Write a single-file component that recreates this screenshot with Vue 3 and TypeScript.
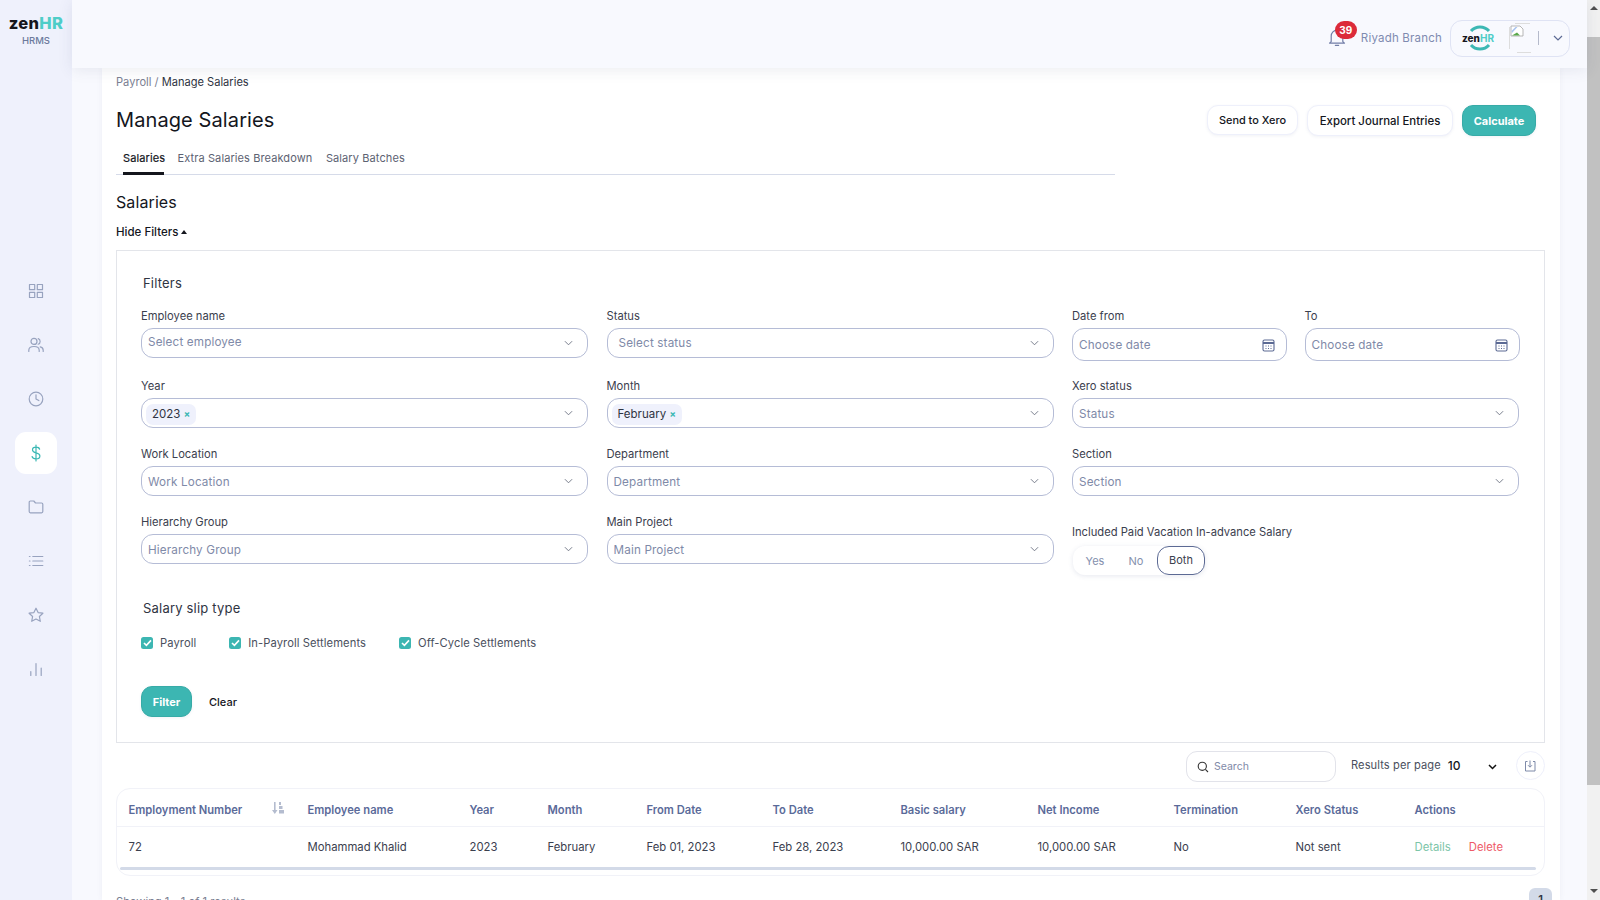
<script setup lang="ts">
const navItems = ['grid', 'users', 'clock', 'dollar', 'folder', 'list', 'star', 'bars']
const columns = ['Employment Number', 'Employee name', 'Year', 'Month', 'From Date', 'To Date', 'Basic salary', 'Net Income', 'Termination', 'Xero Status', 'Actions']
const cells = ['72', 'Mohammad Khalid', '2023', 'February', 'Feb 01, 2023', 'Feb 28, 2023', '10,000.00 SAR', '10,000.00 SAR', 'No', 'Not sent']
const slips = ['Payroll', 'In-Payroll Settlements', 'Off-Cycle Settlements']
</script>

<template>
  <div class="app">
    <aside class="sidebar">
      <div class="logo">
        <div class="logo-word">zen<span>HR</span></div>
        <div class="logo-sub">HRMS</div>
      </div>
      <nav class="nav">
        <div v-for="item in navItems" :key="item" class="nav-item" :class="{ active: item === 'dollar' }">
          <svg width="18" height="18" viewBox="0 0 18 18" fill="none" stroke="currentColor" stroke-width="1.2" stroke-linecap="round" stroke-linejoin="round">
            <template v-if="item === 'grid'">
              <rect x="2.5" y="2.5" width="5.2" height="5.2" /><rect x="10.3" y="2.5" width="5.2" height="5.2" /><rect x="2.5" y="10.3" width="5.2" height="5.2" /><rect x="10.3" y="10.3" width="5.2" height="5.2" />
            </template>
            <template v-else-if="item === 'users'">
              <circle cx="7" cy="5.4" r="3" /><path d="M1.8 15.5v-1.2c0-2.4 2-3.8 5.2-3.8s5.2 1.4 5.2 3.8v1.2" /><path d="M11.2 2.6a3 3 0 0 1 0 5.6M13.2 10.8c1.9.4 3 1.6 3 3.4v1.3" />
            </template>
            <template v-else-if="item === 'clock'">
              <circle cx="9" cy="9" r="6.8" /><path d="M9 4.8V9l2.8 1.6" />
            </template>
            <template v-else-if="item === 'dollar'">
              <path d="M12.6 5.2c-.4-1.3-1.8-2-3.6-2-2 0-3.5 1-3.5 2.7 0 3.9 7.4 2 7.4 6 0 1.8-1.6 2.9-3.9 2.9-2 0-3.5-.8-3.9-2.3M9 1v16" />
            </template>
            <template v-else-if="item === 'folder'">
              <path d="M2.2 4.2c0-.7.5-1.2 1.2-1.2h3.4l1.7 2h6.1c.7 0 1.2.5 1.2 1.2v7.4c0 .7-.5 1.2-1.2 1.2H3.4c-.7 0-1.2-.5-1.2-1.2z" />
            </template>
            <template v-else-if="item === 'list'">
              <path d="M5.8 4.5h10M5.8 9h10M5.8 13.5h10M2.4 4.5h.6M2.4 9h.6M2.4 13.5h.6" />
            </template>
            <template v-else-if="item === 'star'">
              <path d="M9 2.2l2.1 4.4 4.8.6-3.5 3.3.9 4.8L9 13l-4.3 2.3.9-4.8-3.5-3.3 4.8-.6z" />
            </template>
            <template v-else>
              <path d="M3.8 15.5v-4M9 15.5V3.5M14.2 15.5V8" />
            </template>
          </svg>
        </div>
      </nav>
    </aside>

    <div class="main">
      <header class="topbar">
        <div class="bell-wrap">
          <svg class="bell" width="18" height="20" viewBox="0 0 18 20" fill="none" stroke="#737fa8" stroke-width="1.2" stroke-linecap="round" stroke-linejoin="round">
            <path d="M3.2 14.6V9a5.8 5.8 0 0 1 11.6 0v5.6l1.7 1.5h-15zM7.4 18.4h3.2" />
          </svg>
          <span class="badge">39</span>
        </div>
        <span class="branch">Riyadh Branch</span>
        <div class="account">
          <div class="mini-logo">
            <svg class="mini-ring" width="28" height="28" viewBox="0 0 28 28" fill="none" stroke="#3cb8b4" stroke-width="3">
              <path d="M5 7a12 12 0 0 1 18 0M23 21a12 12 0 0 1-18 0" />
            </svg>
            <span class="mini-word">zen<span>HR</span></span>
          </div>
          <svg class="broken" width="26" height="30" viewBox="0 0 26 30" fill="none">
            <path d="M.5 4v22M6 .5h15M8 29.5h14" stroke="#dddddd" />
            <path d="M2 3h9l3 3v7H2z" fill="#fff" stroke="#a5a5a5" stroke-width=".8" />
            <path d="M2.5 8l4-4h2L3 10z" fill="#aac4f0" />
            <path d="M3 12.5l5-3 3 3z" fill="#58a84b" />
          </svg>
          <span class="divider"></span>
          <svg class="chev" width="10" height="6" viewBox="0 0 10 6" fill="none" stroke="#5c6a94" stroke-width="1.2"><path d="M1 1l4 4 4-4" /></svg>
        </div>
      </header>

      <div class="content">
        <section class="card">
          <div class="crumbs"><span class="crumb-root">Payroll / </span>Manage Salaries</div>
          <div class="title-row">
            <h1>Manage Salaries</h1>
            <div class="actions">
              <button class="btn small">Send to Xero</button>
              <button class="btn export-btn">Export Journal Entries</button>
              <button class="btn primary">Calculate</button>
            </div>
          </div>
          <div class="tabs">
            <span class="tab on">Salaries</span>
            <span class="tab">Extra Salaries Breakdown</span>
            <span class="tab">Salary Batches</span>
          </div>
          <h2>Salaries</h2>
          <div class="hide">Hide Filters <i class="caret"></i></div>

          <div class="filters">
            <h3 class="filters-title">Filters</h3>
            <div class="form">
              <div class="field"><label>Employee name</label><div class="select"><span class="ph lift">Select employee</span><svg class="dn" viewBox="0 0 10 6"><path d="M1 1l4 4 4-4" /></svg></div></div>
              <div class="field"><label>Status</label><div class="select"><span class="ph wide">Select status</span><svg class="dn" viewBox="0 0 10 6"><path d="M1 1l4 4 4-4" /></svg></div></div>
              <div class="dates">
                <div class="field"><label>Date from</label><div class="select date"><span class="ph">Choose date</span><svg width="13" height="14" viewBox="0 0 13 14" fill="none" stroke="#5c6a94" stroke-width="1.1"><rect x="1" y="2" width="11" height="11" rx="1.5" /><path d="M1 5h11" stroke-width="2" /><path d="M3.5 8h1M6 8h1M8.5 8h1M3.5 10.5h1M6 10.5h1M8.5 10.5h1" /></svg></div></div>
                <div class="field"><label>To</label><div class="select date"><span class="ph">Choose date</span><svg width="13" height="14" viewBox="0 0 13 14" fill="none" stroke="#5c6a94" stroke-width="1.1"><rect x="1" y="2" width="11" height="11" rx="1.5" /><path d="M1 5h11" stroke-width="2" /><path d="M3.5 8h1M6 8h1M8.5 8h1M3.5 10.5h1M6 10.5h1M8.5 10.5h1" /></svg></div></div>
              </div>

              <div class="field"><label>Year</label><div class="select"><span class="chip">2023 <b>×</b></span><svg class="dn" viewBox="0 0 10 6"><path d="M1 1l4 4 4-4" /></svg></div></div>
              <div class="field"><label>Month</label><div class="select"><span class="chip">February <b>×</b></span><svg class="dn" viewBox="0 0 10 6"><path d="M1 1l4 4 4-4" /></svg></div></div>
              <div class="field"><label>Xero status</label><div class="select"><span class="ph">Status</span><svg class="dn" viewBox="0 0 10 6"><path d="M1 1l4 4 4-4" /></svg></div></div>

              <div class="field"><label>Work Location</label><div class="select"><span class="ph">Work Location</span><svg class="dn" viewBox="0 0 10 6"><path d="M1 1l4 4 4-4" /></svg></div></div>
              <div class="field"><label>Department</label><div class="select"><span class="ph">Department</span><svg class="dn" viewBox="0 0 10 6"><path d="M1 1l4 4 4-4" /></svg></div></div>
              <div class="field"><label>Section</label><div class="select"><span class="ph">Section</span><svg class="dn" viewBox="0 0 10 6"><path d="M1 1l4 4 4-4" /></svg></div></div>

              <div class="field"><label>Hierarchy Group</label><div class="select"><span class="ph">Hierarchy Group</span><svg class="dn" viewBox="0 0 10 6"><path d="M1 1l4 4 4-4" /></svg></div></div>
              <div class="field"><label>Main Project</label><div class="select"><span class="ph">Main Project</span><svg class="dn" viewBox="0 0 10 6"><path d="M1 1l4 4 4-4" /></svg></div></div>
              <div class="field vacation">
                <label>Included Paid Vacation In-advance Salary</label>
                <div class="toggle"><span>Yes</span><span>No</span><span class="sel">Both</span></div>
              </div>
            </div>

            <h3 class="slip-title">Salary slip type</h3>
            <div class="slips">
              <div v-for="s in slips" :key="s" class="slip">
                <span class="cb"><svg width="9" height="8" viewBox="0 0 9 8" fill="none" stroke="#fff" stroke-width="1.6"><path d="M1 4l2.4 2.4L8 1.4" /></svg></span>
                {{ s }}
              </div>
            </div>
            <div class="filter-actions">
              <button class="btn primary filter">Filter</button>
              <span class="clear">Clear</span>
            </div>
          </div>

          <div class="toolbar">
            <div class="search">
              <svg width="12" height="12" viewBox="0 0 12 12" fill="none" stroke="#333" stroke-width="1.1"><circle cx="5.3" cy="5.3" r="4.1" /><path d="M8.4 8.4L11 11" /></svg>
              <span>Search</span>
            </div>
            <div class="per">Results per page</div>
            <div class="per-value">10</div>
            <svg class="per-chev" width="9" height="6" viewBox="0 0 9 6" fill="none" stroke="#111" stroke-width="1.5"><path d="M1 1l3.5 3.5L8 1" /></svg>
            <div class="export">
              <svg width="12" height="12" viewBox="0 0 12 12" fill="none" stroke="#7e8aa9" stroke-width="1"><path d="M3.5 1.500h-2v9.500h9.500V1.500h-2M6 .5v6.500M4 5.200L6 7.200 8 5.200" /></svg>
            </div>
          </div>

          <div class="table">
            <div class="row head">
              <div v-for="c in columns" :key="c" class="cell">
                {{ c }}
                <svg v-if="c === 'Employment Number'" class="sort" width="12" height="12" viewBox="0 0 12 12" fill="#b4bccf"><path d="M2 0h1.600v8H5.500L2.800 12 0 8h2zM7 0h2v3H7zM7 4h3.500v3H7zM7 8h5v3.500H7z" /></svg>
              </div>
            </div>
            <div class="row body">
              <div v-for="(c, i) in cells" :key="i" class="cell">{{ c }}</div>
              <div class="cell acts"><span class="details">Details</span><span class="delete">Delete</span></div>
            </div>
            <div class="hbar"></div>
          </div>

          <div class="foot">
            <span class="showing">Showing 1 - 1 of 1 results</span>
            <span class="page">1</span>
          </div>
        </section>
      </div>
    </div>

    <div class="scrollbar">
      <i class="arrow up"></i>
      <div class="thumb"></div>
      <i class="arrow down"></i>
    </div>
  </div>
</template>

<style>
html, body { margin: 0; overflow: hidden; }
</style>

<style scoped>
* { box-sizing: border-box; }
.app { display: flex; width: 1600px; height: 900px; overflow: hidden; font-family: Inter, "Noto Sans", sans-serif; background: #f8f9fe; color: #2f3442; font-size: 12px; }
.sidebar { width: 72px; flex: none; background: #eff1fc; display: flex; flex-direction: column; align-items: center; }
.logo { height: 270px; padding-top: 13px; text-align: center; }
.logo-word { font-size: 16.5px; font-weight: 800; line-height: 20px; color: #16161c; letter-spacing: .3px; }
.logo-word span { color: #4fcdc8; }
.logo-sub { font-size: 9.5px; line-height: 14px; margin-top: 1px; color: #6c7a9c; font-weight: 500; }
.nav { display: flex; flex-direction: column; gap: 12px; }
.nav-item { width: 42px; height: 42px; border-radius: 11px; display: flex; align-items: center; justify-content: center; color: #98a3bf; }
.nav-item.active { background: #fff; color: #3cb8b4; }

.main { flex: 1; min-width: 0; display: flex; flex-direction: column; }
.topbar { height: 68px; flex: none; background: #f8f9fe; box-shadow: 0 2px 14px rgba(60, 70, 110, .1); display: flex; align-items: center; justify-content: flex-end; padding-right: 17px; position: relative; z-index: 2; }
.bell-wrap { position: relative; width: 18px; height: 20px; margin-right: 15px; margin-top: 6px; }
.bell { display: block; }
.badge { position: absolute; left: 7px; top: -6px; width: 22px; height: 18px; border-radius: 9px; background: #dc2b3a; color: #fff; font-size: 10px; font-weight: 700; line-height: 18px; text-align: center; }
.branch { font-size: 11.5px; color: #7f8bb0; margin-right: 8px; margin-top: 8px; letter-spacing: .2px; }
.account { width: 120px; height: 37px; border: 1px solid #dfe3f4; border-radius: 12px; display: flex; align-items: center; margin-top: 8px; position: relative; }
.mini-logo { width: 32px; height: 28px; margin-left: 11px; position: relative; display: flex; align-items: center; justify-content: center; }
.mini-ring { position: absolute; left: 4px; top: 0; }
.mini-word { position: relative; font-size: 10px; font-weight: 800; color: #16161c; }
.mini-word span { color: #4fcdc8; font-weight: 700; }
.broken { margin-left: 15px; }
.divider { width: 1px; height: 14px; background: #b5bacb; margin-left: 3px; }
.chev { margin-left: 14px; }

.content { flex: 1; min-height: 0; padding: 0 27px 0 30px; }
.card { background: #fff; height: 832px; padding: 0 15px 0 14px; box-shadow: 0 0 6px rgba(60, 70, 110, .06); overflow: hidden; }
.crumbs { padding-top: 7px; height: 21px; line-height: 14px; color: #2f3442; font-size: 11.1px; }
.crumb-root { color: #7b8092; }
.title-row { display: flex; justify-content: space-between; align-items: flex-start; height: 60px; padding-right: 9px; padding-top: 16px; }
h1 { margin: 3px 0 0; font-size: 20px; line-height: 24px; font-weight: 400; color: #14161d; letter-spacing: .1px; }
.actions { display: flex; gap: 9px; align-items: flex-start; }
.btn { height: 31px; font-family: inherit; font-size: 11.4px; font-weight: 500; color: #14161d; background: #fff; border: 1px solid #eef0fb; border-radius: 11px; padding: 0; box-shadow: 0 1px 3px rgba(80, 90, 140, .08); }
.btn.small { font-size: 10.9px; height: 30px; width: 91px; }
.export-btn { width: 146px; }
.btn.primary { background: #3cb6b2; color: #fff; border-color: #37aba7; font-weight: 700; font-size: 11px; width: 74px; }
.tabs { width: 999px; height: 26px; display: flex; gap: 13.5px; padding-left: 7px; border-bottom: 1px solid #d6dbe9; }
.tab { height: 26px; line-height: 18px; font-size: 11px; color: #5c6272; letter-spacing: .1px; }
.tab.on { color: #14161d; border-bottom: 3px solid #14161d; width: 41px; -webkit-text-stroke: .2px #14161d; }
h2 { margin: 16.5px 0 0; font-size: 16px; line-height: 20px; font-weight: 400; color: #14161d; letter-spacing: .1px; }
.hide { margin-top: 13.5px; height: 14px; line-height: 14px; font-size: 11.5px; font-weight: 500; color: #14161d; display: flex; align-items: center; gap: 3px; }
.caret { width: 0; height: 0; border: 3.5px solid transparent; border-top: 0; border-bottom: 4px solid #14161d; }
.filters { margin-top: 11px; height: 493px; border: 1px solid #e3e5ea; padding: 23px 24px 0 24px; }
h3 { margin: 0; font-weight: 400; color: #2f3442; }
.filters-title { font-size: 13px; line-height: 18px; margin-left: 2px; letter-spacing: .2px; }
.form { margin-top: 17px; display: grid; grid-template-columns: 447px 447px 447px; column-gap: 18.5px; grid-template-rows: 70px 68px 68px 64px; }
.field { display: flex; flex-direction: column; min-width: 0; }
label { height: 14px; line-height: 14px; font-size: 11.2px; color: #3b404e; margin-bottom: 5px; }
.select { height: 30px; border: 1px solid #b5bcd6; border-radius: 12px; display: flex; align-items: center; justify-content: space-between; padding: 0 14px 0 6px; }
.ph { color: #7f8aa8; font-size: 11.7px; letter-spacing: .15px; margin-top: 2px; }
.ph.lift { margin-top: -3px; }
.ph.wide { margin-left: 5px; margin-top: 0; }
.dn { flex: none; width: 9px; height: 6px; fill: none; stroke: #6a7180; stroke-width: 1; }
.chip { height: 21px; line-height: 21px; background: #eff1fc; border-radius: 7px; padding: 0 6px; color: #2f3442; font-size: 11.5px; margin-left: -2px; margin-top: 3px; }
.chip b { color: #3cb8b4; font-size: 9.5px; font-weight: 700; }
.dates { display: grid; grid-template-columns: 215px 215px; column-gap: 17.5px; }
.select.date { height: 33px; padding-right: 11px; }
.select.date .ph { margin-top: 1px; }
.vacation { padding-top: 10px; }
.toggle { width: 132px; height: 29px; margin-top: 2px; margin-left: 1px; border-radius: 12px; display: flex; align-items: center; box-shadow: 0 1px 5px rgba(80, 90, 140, .14); font-size: 11px; color: #8490ad; }
.toggle span { text-align: center; }
.toggle span:nth-child(1) { width: 44px; }
.toggle span:nth-child(2) { width: 38px; }
.toggle .sel { width: 48px; height: 29px; line-height: 27px; border: 1px solid #5c6a94; border-radius: 12px; color: #3b404e; margin-left: 2px; }
.slip-title { font-size: 13px; line-height: 18px; margin: 20px 0 0 2px; letter-spacing: .2px; }
.slips { display: flex; margin-top: 18px; height: 16px; align-items: center; }
.slip { display: flex; align-items: center; font-size: 11.2px; color: #4a4f5d; letter-spacing: .08px; margin-right: 33px; }
.cb { width: 12px; height: 12px; border-radius: 2.5px; background: #3cb6b2; display: flex; align-items: center; justify-content: center; margin-right: 7px; }
.filter-actions { margin-top: 35px; display: flex; align-items: center; }
.btn.primary.filter { width: 51px; height: 31px; font-size: 11px; }
.clear { margin-left: 17px; font-size: 11px; font-weight: 500; color: #14161d; }
.toolbar { height: 45px; display: flex; align-items: flex-start; padding-top: 8px; }
.search { flex: none; margin-left: 1070px; width: 150px; height: 31px; border: 1px solid #e2e3ea; border-radius: 11px; display: flex; align-items: center; padding-left: 10px; gap: 5px; font-size: 10.5px; color: #7f8aa8; }
.per { flex: none; margin-left: 15px; margin-top: 7px; font-size: 11.1px; color: #4a4f5d; letter-spacing: .1px; white-space: nowrap; }
.per-value { flex: none; width: 14px; margin-left: 7px; margin-top: 7px; font-size: 12px; font-weight: 500; color: #14161d; }
.per-chev { flex: none; margin-left: 26px; margin-top: 13px; }
.export { flex: none; margin-left: 19px; width: 29px; height: 29px; border: 1px solid #eef0fb; border-radius: 50%; display: flex; align-items: center; justify-content: center; }
.table { width: 1429px; height: 88px; border: 1px solid #f1f2f8; border-radius: 14px; }
.row { display: grid; grid-template-columns: 179px 162px 78px 99px 126px 128px 137px 136px 122px 119px 1fr; padding-left: 11.5px; align-items: center; }
.head { height: 38px; padding-top: 4px; border-bottom: 1px solid #f1f2f8; color: #5a6a99; font-weight: 600; font-size: 11.2px; }
.body { height: 38px; padding-top: 1px; font-size: 11.3px; color: #3b404e; }
.cell { position: relative; white-space: nowrap; }
.sort { position: absolute; left: 143px; top: -1px; }
.acts { display: flex; gap: 18px; }
.details { color: #7cc5a8; }
.delete { color: #ee5a67; }
.hbar { margin: 2px 0 0 3px; width: 1416px; height: 3px; background: #d3dae8; border-radius: 2px; }
.foot { position: relative; margin-top: 16px; color: #7b8092; font-size: 11.2px; height: 24px; }
.showing { display: block; padding-top: 3px; }
.page { position: absolute; left: 1413px; top: -4px; width: 23px; height: 24px; background: #d3dae8; border-radius: 6px; text-align: center; line-height: 24px; font-weight: 600; color: #2f3442; }

.scrollbar { width: 13px; flex: none; background: #f1f1f1; display: flex; flex-direction: column; align-items: center; }
.thumb { width: 100%; height: 748px; background: #c1c1c1; margin-top: 27px; }
.arrow { width: 0; height: 0; border: 4px solid transparent; }
.arrow.up { border-top: 0; border-bottom: 4px solid #505050; margin-top: 6px; }
.arrow.down { border-bottom: 0; border-top: 4px solid #505050; margin-top: 104px; }
</style>
